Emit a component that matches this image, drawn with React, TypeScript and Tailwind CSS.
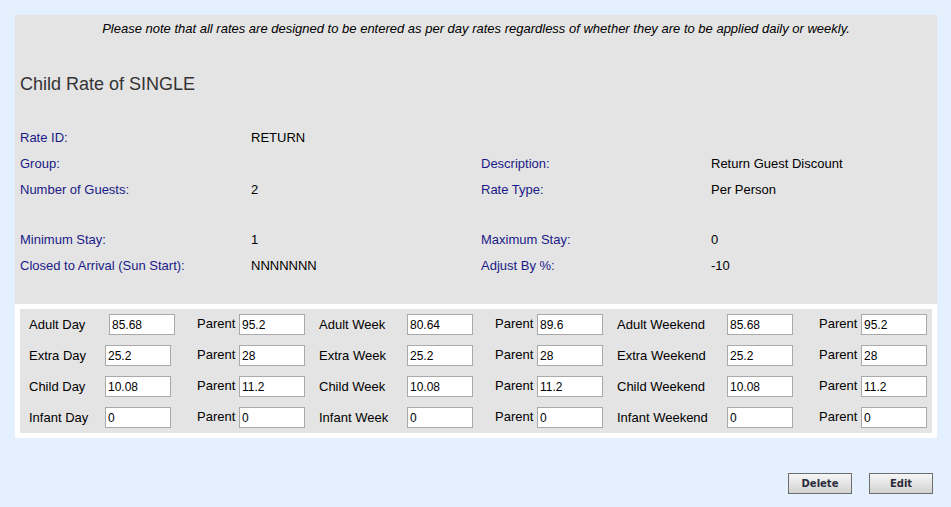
const info: [string, string, string, string][] = [
  ["Rate ID:", "RETURN", "", ""],
  ["Group:", "", "Description:", "Return Guest Discount"],
  ["Number of Guests:", "2", "Rate Type:", "Per Person"],
]

const info2: [string, string, string, string][] = [
  ["Minimum Stay:", "1", "Maximum Stay:", "0"],
  ["Closed to Arrival (Sun Start):", "NNNNNNN", "Adjust By %:", "-10"],
]

const rates = [
  { kind: "Adult", v: ["85.68", "95.2", "80.64", "89.6", "85.68", "95.2"] },
  { kind: "Extra", v: ["25.2", "28", "25.2", "28", "25.2", "28"] },
  { kind: "Child", v: ["10.08", "11.2", "10.08", "11.2", "10.08", "11.2"] },
  { kind: "Infant", v: ["0", "0", "0", "0", "0", "0"] },
]

const InfoRow = ({ row }: { row: [string, string, string, string] }) => (
  <div className="grid grid-cols-[231px_230px_230px_1fr] h-[26px] items-center text-[13px]">
    <div className="text-[#1a1a86]">{row[0]}</div>
    <div className="text-black">{row[1]}</div>
    <div className="text-[#1a1a86]">{row[2]}</div>
    <div className="text-black">{row[3]}</div>
  </div>
)

const RateInput = ({ value, className = "" }: { value: string; className?: string }) => (
  <input
    readOnly
    value={value}
    className={`w-[66px] h-[21px] bg-white border border-[#a9a9a9] px-[2px] text-[12px] text-black outline-none ${className}`}
  />
)

const App = () => {
  return (
    <div className="w-[951px] h-[507px] bg-[#e4f0fe] pt-[15px] px-[15px] overflow-hidden" style={{ fontFamily: '"Liberation Sans", Arial, sans-serif' }}>
      {/* Rate details */}
      <div className="w-[922px] bg-[#e4e4e4] pt-px pb-[25px]">
        <div className="h-[26px] flex items-center justify-center italic text-[13px] text-black">
          Please note that all rates are designed to be entered as per day rates regardless of whether they are to be applied daily or weekly.
        </div>
        <div className="mt-[30px] h-[24px] flex items-center pl-[5px] text-[18px] text-[#333]">Child Rate of SINGLE</div>
        <div className="mt-[29px] pl-[5px]">
          {info.map((r) => (
            <InfoRow key={r[0]} row={r} />
          ))}
          <div className="h-[24px]" />
          {info2.map((r) => (
            <InfoRow key={r[0]} row={r} />
          ))}
        </div>
      </div>

      {/* Rate grid */}
      <div className="w-[922px] bg-white p-[5px]">
        <div className="bg-[#e4e4e4] text-[13px] text-black">
          {rates.map((r, i) => (
            <div key={r.kind} className="h-[31px] flex items-center pl-[9px]">
              <div className="w-[76px] pt-px">{r.kind} Day</div>
              <div className="w-[92px]">
                <RateInput value={r.v[0]} className={i === 0 ? "ml-[4px]" : ""} />
              </div>
              <div className="w-[42px] -mt-px">Parent</div>
              <div className="w-[80px]">
                <RateInput value={r.v[1]} />
              </div>
              <div className="w-[88px] pt-px">{r.kind} Week</div>
              <div className="w-[88px]">
                <RateInput value={r.v[2]} />
              </div>
              <div className="w-[42px] -mt-px">Parent</div>
              <div className="w-[80px]">
                <RateInput value={r.v[3]} />
              </div>
              <div className="w-[110px] pt-px">{r.kind} Weekend</div>
              <div className="w-[92px]">
                <RateInput value={r.v[4]} />
              </div>
              <div className="w-[42px] -mt-px">Parent</div>
              <div>
                <RateInput value={r.v[5]} />
              </div>
            </div>
          ))}
        </div>
      </div>

      {/* Actions */}
      <div className="mt-[35px] flex justify-end gap-[17px] pr-[3px]">
        {["Delete", "Edit"].map((b) => (
          <button
            key={b}
            className="w-[64px] h-[21px] border border-[#6d6d6d] bg-gradient-to-b from-[#f6f6f6] to-[#d2d2d2] text-[10px] font-bold text-[#2b2b3b]"
            style={{ fontFamily: '"DejaVu Sans", Verdana, sans-serif' }}
          >
            {b}
          </button>
        ))}
      </div>
    </div>
  )
}

export default App
